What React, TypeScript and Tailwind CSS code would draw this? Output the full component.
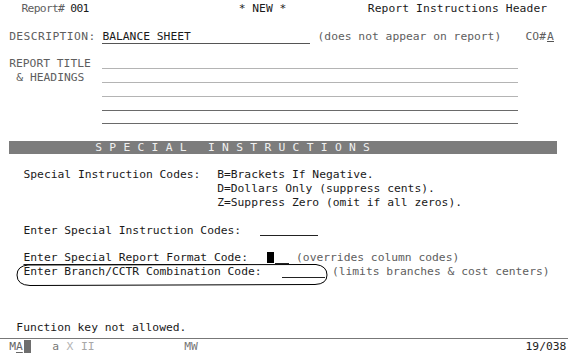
import React from 'react';

// one 80-column line of the 5250 screen
const Row = ({ children }: { children?: React.ReactNode }) => (
    <div className="grid grid-cols-[repeat(80,7.175px)] grid-rows-[13.86px] h-[13.86px] leading-[13.86px] whitespace-pre">
        {children}
    </div>
);

const App = () => {
    return (
        <div className="relative w-[574px] h-[356px] bg-white text-[#1a1a1a] text-[11.3px] [font-family:'DejaVu_Sans_Mono','Liberation_Mono',monospace] overflow-hidden pt-[2px] pl-[2px]">
            <Row>
                <span className="col-start-[4] row-start-1 -ml-[2px] tracking-[-0.7px]">
                    <span className="text-[#5e5e5e]">Report#</span> 001
                </span>
                <span className="col-start-[34] row-start-1">* NEW *</span>
                <span className="col-start-[52] row-start-1 tracking-[0.1px]">Report Instructions Header</span>
            </Row>
            <Row />
            <Row>
                <span className="col-start-[2] row-start-1 text-[#5e5e5e] tracking-[0.4px]">DESCRIPTION:</span>
                <span className="col-start-[15] col-end-[44] row-start-1 h-full border-b border-[#555]">BALANCE SHEET</span>
                <span className="col-start-[45] row-start-1 text-[#5e5e5e]">(does not appear on report)</span>
                <span className="col-start-[74] row-start-1 text-[#5e5e5e]">CO#</span>
                <span className="col-start-[77] row-start-1 h-[12.5px] leading-[13.86px] border-b border-[#555] text-[#5e5e5e]">A</span>
            </Row>
            <Row />
            <Row>
                <span className="col-start-[2] row-start-1 text-[#5e5e5e]">REPORT TITLE</span>
                <span className="col-start-[15] col-end-[73] row-start-1 h-[11.5px] border-b border-[#b4b4b4]" />
            </Row>
            <Row>
                <span className="col-start-[3] row-start-1 text-[#5e5e5e]">&amp; HEADINGS</span>
                <span className="col-start-[15] col-end-[73] row-start-1 h-[11.5px] border-b border-[#b4b4b4]" />
            </Row>
            <Row>
                <span className="col-start-[15] col-end-[73] row-start-1 h-[11.5px] border-b border-[#b4b4b4]" />
            </Row>
            <Row>
                <span className="col-start-[15] col-end-[73] row-start-1 h-[11.5px] border-b border-[#6a6a6a]" />
            </Row>
            <Row>
                <span className="col-start-[15] col-end-[73] row-start-1 h-[11.5px] border-b border-[#6a6a6a]" />
            </Row>
            <Row />
            <Row>
                <div className="col-start-[2] row-start-1 w-[548px] h-full bg-[#7c7c7c] text-[#f0f0f0] pl-[86px] tracking-[0.25px]">
                    {'S P E C I A L   I N S T R U C T I O N S'}
                </div>
            </Row>
            <Row />
            <Row>
                <span className="col-start-[4] row-start-1">Special Instruction Codes:</span>
                <span className="col-start-[31] row-start-1">B=Brackets If Negative.</span>
            </Row>
            <Row>
                <span className="col-start-[31] row-start-1">D=Dollars Only (suppress cents).</span>
            </Row>
            <Row>
                <span className="col-start-[31] row-start-1">Z=Suppress Zero (omit if all zeros).</span>
            </Row>
            <Row />
            <Row>
                <span className="col-start-[4] row-start-1">Enter Special Instruction Codes:</span>
                <span className="col-start-[37] col-end-[45] row-start-1 h-[12.5px] border-b border-[#222]" />
            </Row>
            <Row />
            <Row>
                <span className="col-start-[4] row-start-1 underline underline-offset-[3px] decoration-[#222]">
                    Enter Special Report Format Code:
                </span>
                <span className="col-start-[38] row-start-1 mt-[1px] w-[7px] h-[11px] bg-black" />
                <span className="col-start-[39] col-end-[41] row-start-1 h-[12.5px] border-b border-[#222]" />
                <span className="col-start-[42] row-start-1 text-[#5e5e5e]">(overrides column codes)</span>
            </Row>
            <Row>
                <span className="col-start-[4] row-start-1">Enter Branch/CCTR Combination Code:</span>
                <span className="col-start-[40] col-end-[46] row-start-1 h-[12.5px] border-b border-[#222]" />
                <span className="col-start-[47] row-start-1 text-[#5e5e5e]">(limits branches &amp; cost centers)</span>
            </Row>
            <Row />
            <Row />
            <Row />
            <Row>
                <span className="col-start-[3] row-start-1">Function key not allowed.</span>
            </Row>

            {/* status line */}
            <div className="-ml-[2px] mt-[3px] w-[568px] border-t border-[#777]">
                <div className="pl-[2px] grid grid-cols-[repeat(80,7.175px)] grid-rows-[15px] h-[15px] leading-[15px] whitespace-pre">
                    <span className="col-start-[2] row-start-1 text-[#666]">
                        M<span className="underline underline-offset-2">A</span>
                    </span>
                    <span className="col-start-[4] row-start-1 mt-[1px] w-[7px] h-[13px] bg-[#6e6e6e]" />
                    <span className="col-start-[8] row-start-1 text-[#777]">a</span>
                    <span className="col-start-[10] row-start-1 text-[#b4b4b4]">X</span>
                    <span className="col-start-[12] row-start-1 text-[#a8a8a8]">II</span>
                    <span className="col-start-[26] row-start-1 ml-[3px] text-[#777]">MW</span>
                    <span className="col-start-[74] row-start-1 text-[#222]">19/038</span>
                </div>
            </div>

            {/* hand-drawn ring round the branch/cctr prompt */}
            <svg className="absolute left-0 top-0 pointer-events-none" width="574" height="356">
                <path
                    d="M 28 265 L 316 264.5 Q 327 266 327 275 Q 327 284 315 284.5 L 30 285.5 Q 17 285 17 275 Q 17 266 28 265"
                    fill="none"
                    stroke="#000"
                    strokeWidth="1"
                />
            </svg>
        </div>
    );
};

export default App;
